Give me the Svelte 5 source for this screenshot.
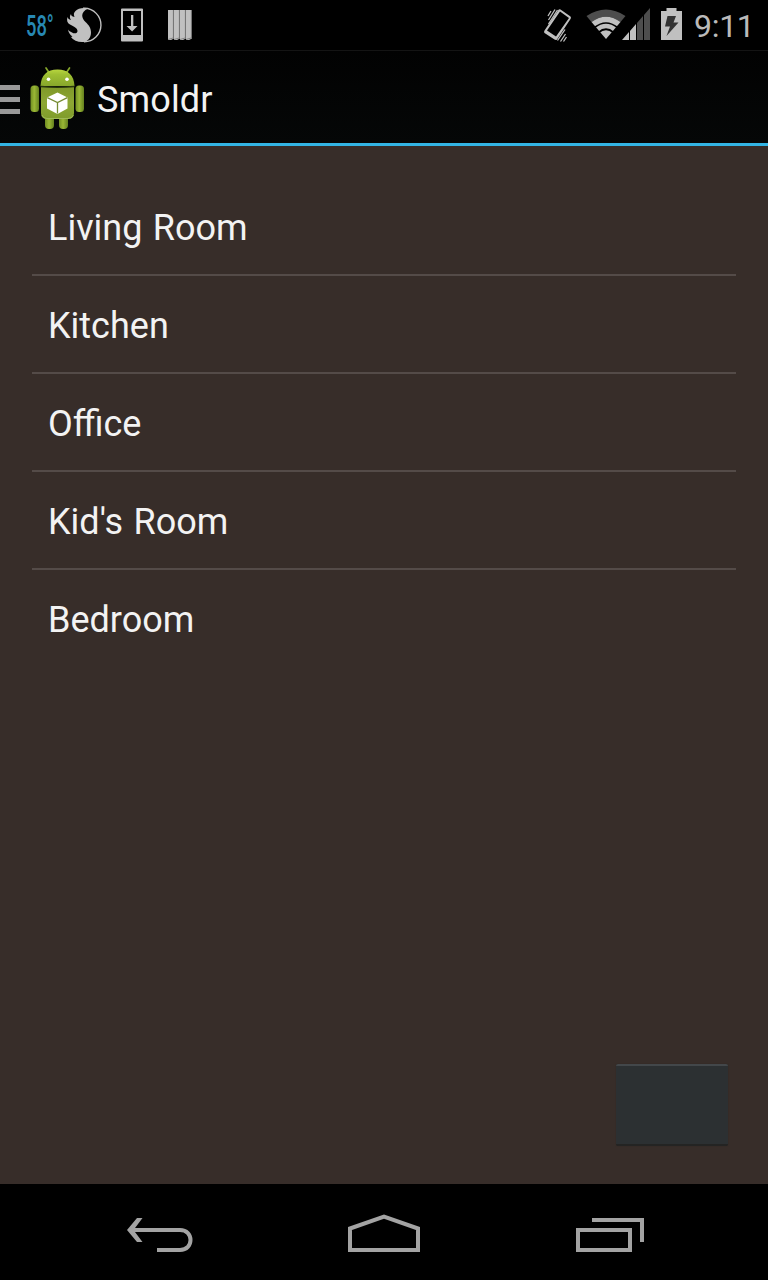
<script lang="ts">
  let { title = "Smoldr" }: { title?: string } = $props();

  const rooms = ["Living Room", "Kitchen", "Office", "Kid's Room", "Bedroom"];
</script>

<div class="screen">
  <div class="status-bar">
    <span class="temperature"><span>58°</span></span>
    <svg class="snapdragon" width="36" height="36" viewBox="0 0 36 36">
      <path d="M17 1.300H18.500A16.700 16.700 0 0 1 18 34.700" fill="none" stroke="#c0c0c0" stroke-width="1.400" />
      <path
        d="M22 1.500C17 0.300 12 1.200 9.500 4C7.500 6 7.500 7.500 8.500 10C6 9.500 5 8.500 5 7C3.500 9 3.500 11 5 13C3 12.500 2 11.500 1.500 10C0.500 13.500 1.200 16 4 17.500C8 19.500 11.500 21 11.500 24C11.500 26.500 8.500 27 6 25.500C4 24.500 3 24 2 22.500C2.500 25.500 4 28 6.500 29.500C5.500 30 5 30 4.500 29.500C7.500 33.500 12.500 35.500 17.500 35C22 34.500 25 30.500 25 25.500C25 20.500 22.500 18 19.500 15C15.500 11 14 5.500 22 1.500Z"
        fill="#c0c0c0"
      />
    </svg>
    <svg class="download" width="24" height="34" viewBox="0 0 24 34">
      <path d="M2 0.500H22Q23 0.500 23 1.500V32.500Q23 33.500 22 33.500H2Q1 33.500 1 32.500V1.500Q1 0.500 2 0.500ZM3 3V27H21V3Z" fill="#c0c0c0" fill-rule="evenodd" />
      <path d="M11 7H13.300V18H17.500L12.100 23.500L6.500 18H11Z" fill="#c0c0c0" />
    </svg>
    <svg class="books" width="26" height="32" viewBox="0 0 26 32">
      {#each [1, 7, 13, 19] as x}
        <path d="M{x} 1H{x + 5}V30L{x + 3} 31H{x}Z" fill="#c0c0c0" />
        <path d="M{x + 5.4} 1V30" stroke="#858585" />
        <path d="M{x} 30.500L{x + 5} 29" stroke="#858585" />
      {/each}
    </svg>

    <span class="spacer"></span>

    <svg class="vibrate" width="30" height="36" viewBox="0 0 30 36">
      <path d="M17.500 2.500L27.500 9.500Q28.500 10.500 27.500 12L14 32.500Q13 33.500 11.500 32.600L1.500 26Q0.500 25 1.500 23.500L15 3.500Q16 1.800 17.500 2.500ZM17 4.500L4 23.500L13 29.500L26 11Z" fill="#c0c0c0" fill-rule="evenodd" />
      <path d="M5.500 13L12 2.500M5.500 17L14.500 3M5 9L8 4M14.500 33.500L22 22.500M17.500 34.500L22.500 27M20.500 34.500L23.500 30" stroke="#c0c0c0" stroke-width="1.300" fill="none" />
    </svg>
    <svg class="wifi" width="40" height="32" viewBox="0 0 40 32">
      <path d="M0.500 7Q20 -6 39.500 7L34.500 13Q20 2.500 5.500 13Z" fill="#4d4d4d" />
      <path d="M5.500 13Q20 2.500 34.500 13L20 30Z" fill="#c0c0c0" />
      <g fill="none" stroke="#000" stroke-width="1.700">
        <path d="M8.500 18.500Q20 9.500 31.500 18.500" />
        <path d="M12.500 23.500Q20 17 27.500 23.500" />
      </g>
    </svg>
    <svg class="signal" width="28" height="32" viewBox="0 0 28 32">
      <path d="M0 32L7 24V32ZM8 23L14 16V32H8Z" fill="#c0c0c0" />
      <path d="M15 15L21 8V32H15ZM22 7L28 0V32H22Z" fill="#4d4d4d" />
    </svg>
    <svg class="battery" width="21" height="32" viewBox="0 0 21 32">
      <path d="M5.500 0H15.500V3H21V32H0V3H5.500Z" fill="#c0c0c0" />
      <path d="M6.500 8H15L12.500 14.500H17.500L5.500 28L9 18.500H4Z" fill="#333" />
    </svg>
    <span class="clock">9:11</span>
  </div>

  <header class="action-bar">
    <div class="drawer">
      <i></i>
      <i></i>
      <i></i>
    </div>
    <svg class="launcher" width="56" height="64" viewBox="0 0 56 64">
      <defs>
        <linearGradient id="body" x1="0" y1="0" x2="0" y2="1">
          <stop offset="0" stop-color="#7f9829" />
          <stop offset="0.500" stop-color="#8da734" />
          <stop offset="1" stop-color="#7f9c2b" />
        </linearGradient>
        <linearGradient id="head" x1="0" y1="0" x2="0" y2="1">
          <stop offset="0" stop-color="#b8d63f" />
          <stop offset="0.300" stop-color="#9fc033" />
          <stop offset="1" stop-color="#87a72b" />
        </linearGradient>
        <linearGradient id="limb" x1="0" y1="0" x2="1" y2="0">
          <stop offset="0" stop-color="#718e22" />
          <stop offset="0.450" stop-color="#9ab735" />
          <stop offset="1" stop-color="#64801e" />
        </linearGradient>
      </defs>
      <path d="M16 2L20 8M39.500 2L35.500 8" stroke="#86a72b" stroke-width="1.700" stroke-linecap="round" />
      <rect x="15" y="46" width="9" height="17" rx="4" fill="url(#limb)" />
      <rect x="29" y="46" width="9" height="17" rx="4" fill="url(#limb)" />
      <rect x="0.500" y="19.500" width="8.500" height="26.500" rx="3.500" fill="url(#limb)" />
      <rect x="45.500" y="19.500" width="8.500" height="26.500" rx="3.500" fill="url(#limb)" />
      <path d="M11 21H44V47Q44 53 38 53H17Q11 53 11 47Z" fill="url(#body)" />
      <path d="M12 49Q13 52.500 17 52.500H38Q42 52.500 43.500 49" fill="none" stroke="#aec66a" stroke-width="0.700" />
      <path d="M10.500 20C11 9 17 3.500 27.500 3.500S44 9 44.500 20Z" fill="url(#head)" />
      <path d="M10.500 20.500Q27 22 44.500 20.500" fill="none" stroke="#28370d" stroke-width="1.300" />
      <circle cx="18.500" cy="13.300" r="1.800" fill="#fff" />
      <circle cx="37" cy="13.300" r="1.800" fill="#fff" />
      <path d="M27.500 26.500L37.500 31.500V42.500L27.500 48L17 42.500V31.500Z" fill="#fff" />
      <path d="M17.300 31.700L27.500 36.500L37.300 31.700M27.500 36.500V47.500" fill="none" stroke="#758b31" stroke-width="1.300" />
    </svg>
    <h1>{title}</h1>
  </header>

  <main>
    <ul>
      {#each rooms as room}
        <li>{room}</li>
      {/each}
    </ul>
    <button aria-label="Add room"></button>
  </main>

  <nav>
    <svg width="72" height="48" viewBox="0 0 72 48">
      <path d="M7 22H56C70 22 70 42 56 42H33" />
      <path class="solid" d="M13 10H18.500L9.500 22L18.500 34H13L3 22Z" />
    </svg>
    <svg width="72" height="48" viewBox="0 0 72 48">
      <path d="M2 42V20.500L36 8.500L70 20.500V42Z" />
    </svg>
    <svg width="72" height="48" viewBox="0 0 72 48">
      <path d="M6 22H58V42H6ZM20 12H70V34" />
    </svg>
  </nav>
</div>

<style>
  :global(body) {
    margin: 0;
    background: #000;
  }

  .screen {
    display: flex;
    flex-direction: column;
    width: 768px;
    height: 1280px;
    font-family: Roboto, sans-serif;
    color: #f3f3f3;
    background: #372d29;
  }

  .status-bar {
    display: flex;
    align-items: flex-start;
    height: 50px;
    box-sizing: border-box;
    padding: 7px 15px 0 26px;
    background: #000;
  }

  .status-bar svg {
    flex: none;
  }

  .temperature {
    width: 40px;
    height: 36px;
    font-size: 30px;
    font-weight: 500;
    line-height: 38px;
    color: #2788b3;
  }

  .temperature span {
    display: inline-block;
    transform: scaleX(0.61);
    transform-origin: left;
  }

  .download {
    margin: 1px 0 0 18px;
  }

  .books {
    margin: 2px 0 0 23px;
  }

  .spacer {
    flex: 1;
  }

  .vibrate {
    margin-right: 1px;
  }

  .wifi {
    margin: 2px 0 0 12px;
  }

  .signal {
    margin: 1px 0 0 -4px;
  }

  .battery {
    margin: 1px 0 0 11px;
  }

  .clock {
    width: 59px;
    margin-left: 12px;
    font-size: 32px;
    line-height: 38px;
    letter-spacing: -0.3px;
    white-space: nowrap;
    color: #bababa;
  }

  .action-bar {
    display: flex;
    align-items: center;
    height: 96px;
    box-sizing: border-box;
    border-top: 1px solid #141414;
    border-bottom: 3px solid #33b5e5;
    background: linear-gradient(#020202, #050707);
  }

  .drawer {
    display: flex;
    flex-direction: column;
    gap: 7px;
    width: 20px;
    margin: 5px 10px 0 0;
  }

  .drawer i {
    height: 5px;
    background: #999;
  }

  .launcher {
    margin-top: 2px;
  }

  h1 {
    margin: 6px 0 0 11px;
    font-size: 36px;
    font-weight: 400;
    line-height: 44px;
    letter-spacing: 0.15px;
  }

  main {
    display: flex;
    flex: 1;
    flex-direction: column;
    justify-content: space-between;
    padding: 32px 32px 38px;
  }

  ul {
    margin: 0;
    padding: 0;
    list-style: none;
  }

  li {
    height: 96px;
    padding: 0 16px;
    font-size: 36px;
    line-height: 100px;
    word-spacing: 1.5px;
  }

  li + li {
    border-top: 2px solid #544b48;
  }

  button {
    align-self: flex-end;
    width: 112px;
    height: 82px;
    margin-right: 8px;
    padding: 0;
    border: 0;
    border-top: 2px solid #43474a;
    border-bottom: 2px solid #242423;
    border-radius: 2px;
    background: #2c3032;
    box-shadow: 0 0 1px #292522;
  }

  nav {
    display: flex;
    justify-content: center;
    gap: 152px;
    height: 96px;
    box-sizing: border-box;
    padding-top: 24px;
    background: #000;
  }

  nav path {
    fill: none;
    stroke: #a3a3a3;
    stroke-width: 4;
  }

  nav .solid {
    fill: #a3a3a3;
    stroke: none;
  }
</style>
